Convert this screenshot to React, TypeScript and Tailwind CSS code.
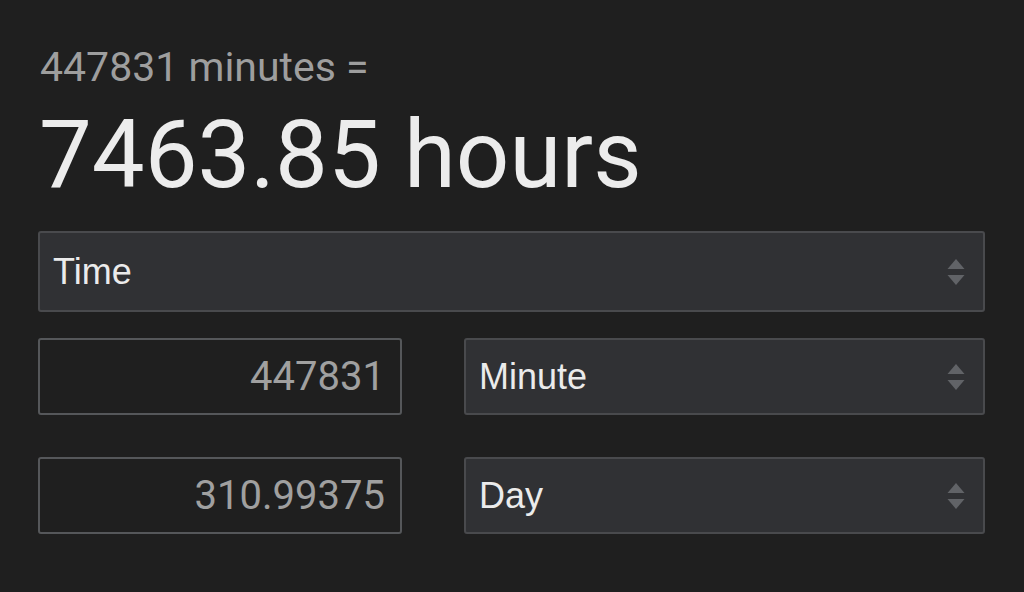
import { FC } from "react";

const SortArrows: FC = () => (
  <svg width="18" height="28" viewBox="0 0 18 28" className="shrink-0">
    <path d="M9 1 L17.5 11 L0.5 11 Z" fill="#616367" />
    <path d="M9 27 L17.5 17 L0.5 17 Z" fill="#616367" />
  </svg>
);

interface SelectBoxProps {
  label: string;
  className?: string;
}

const SelectBox: FC<SelectBoxProps> = ({ label, className }) => (
  <div
    className={
      "flex items-center justify-between bg-[#303134] border-2 border-[#494a4d] rounded-[3px] pl-[13px] pr-[18px] " +
      (className ?? "")
    }
  >
    <span className="text-[36px] text-[#ebebeb] font-['Liberation_Sans',Arial,sans-serif] leading-none">
      {label}
    </span>
    <SortArrows />
  </div>
);

const NumberBox: FC<{ value: string }> = ({ value }) => (
  <div className="flex items-center justify-end w-[364px] h-[77px] border-2 border-[#55575a] rounded-[3px] pr-[15px]">
    <span className="text-[40px] text-[#a0a0a0] font-['Roboto',sans-serif] leading-none">
      {value}
    </span>
  </div>
);

export default function App() {
  return (
    <div className="w-[1024px] h-[592px] bg-[#1f1f1f] pl-[38px] pr-[39px] pt-[43px] font-['Roboto',sans-serif] overflow-hidden">
      <div className="pl-[2px] text-[41px] leading-[48px] text-[#9e9e9e]">
        447831 minutes =
      </div>
      <div className="pl-[1px] mt-[17px] text-[94px] leading-[94px] text-[#ececec]">
        7463.85 hours
      </div>
      <SelectBox label="Time" className="mt-[29px] h-[81px]" />
      <div className="flex gap-[62px] mt-[26px]">
        <NumberBox value="447831" />
        <SelectBox label="Minute" className="flex-1 h-[77px]" />
      </div>
      <div className="flex gap-[62px] mt-[42px]">
        <NumberBox value="310.99375" />
        <SelectBox label="Day" className="flex-1 h-[77px]" />
      </div>
    </div>
  );
}
